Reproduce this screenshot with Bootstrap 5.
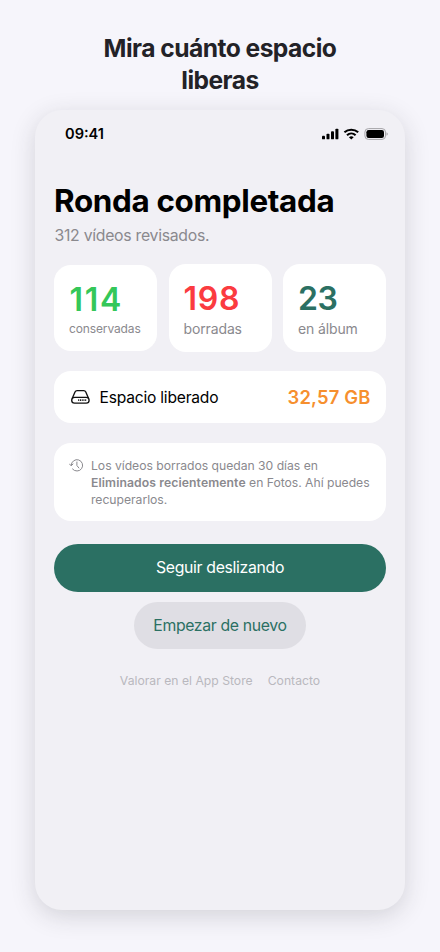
<!DOCTYPE html>
<html lang="es">
<head>
<meta charset="utf-8">
<meta name="viewport" content="width=device-width, initial-scale=1">
<title>Ronda completada</title>
<link href="https://cdn.jsdelivr.net/npm/bootstrap@5.3.0/dist/css/bootstrap.min.css" rel="stylesheet">
<style>
body{background:#f6f5fb;font-family:Inter,"Liberation Sans",sans-serif;height:952px;overflow:hidden}
.headline{font-size:24.6px;line-height:32px;font-weight:700;color:#232227;letter-spacing:-.54px;padding-top:32px;height:110px}
.phone{width:370px;height:800px;border-radius:27px;background:#f1f0f5;box-shadow:0 6px 24px rgba(40,40,50,.17)}
.status{height:47px;padding:0 17.5px 0 30px}
.clock{font-size:14.6px;font-weight:600;color:#000;padding-top:2px}
.content{padding:25px 19px 0}
.title{font-size:31.4px;line-height:38px;font-weight:700;color:#000;letter-spacing:-.34px}
.sub{font-size:15.8px;line-height:20px;color:#8a898e;margin-top:6px;letter-spacing:-.28px;padding-left:.5px}
.panel{background:#fff;border-radius:17px}
.stats{margin-top:17.5px;height:88px;gap:11.5px}
.stat{padding:14.5px 15px 0;height:88px;flex:1 1 0;min-width:0}
.stat.short{height:86px}
.num{font-size:32px;line-height:42px;font-weight:600}
.num.kept{color:#34c759;letter-spacing:1.7px;padding-left:.5px}
.num.gone{color:#fb3b40;letter-spacing:.8px}
.num.album{color:#2b7063;letter-spacing:-.5px}
.lbl{font-size:14px;line-height:18px;color:#8a898e;white-space:nowrap;letter-spacing:-.13px}
.short .lbl{font-size:12px;line-height:16px}
.freed{margin-top:19px;height:52.5px;padding:0 15.5px 0 16px}
.freed .name{font-size:15.6px;color:#000;margin-left:9.5px;letter-spacing:-.21px;padding-top:1.5px}
.freed .size{font-size:18.4px;font-weight:600;color:#f68f2e;letter-spacing:.18px;padding-top:1.5px}
.freed svg{margin-top:1px}
.note{margin-top:20px;height:78px;padding:13.5px 14px 0 15px;color:#8a898e;font-size:12.2px;line-height:17px;letter-spacing:-.03px}
.note b{letter-spacing:.1px}
.note svg{margin-top:1px;margin-right:7px}
.btn-main{margin-top:23px;height:48px;background:#2b7063;color:#fff;font-size:15.8px;border:0;letter-spacing:-.32px}
.btn-alt{margin-top:10px;height:47px;width:172px;background:#dfdee4;color:#2b7063;font-size:15.8px;border:0;padding:0;letter-spacing:-.34px}
.foot{margin-top:24px;font-size:12.2px;line-height:16px;color:#b9b8be;gap:15px}
.battery{margin-left:3px}
</style>
</head>
<body>
<h1 class="headline text-center mb-0">Mira cuánto espacio<br>liberas</h1>
<main class="phone mx-auto">
  <div class="status d-flex align-items-center justify-content-between">
    <span class="clock">09:41</span>
    <div class="d-flex align-items-center">
      <svg width="17" height="12" viewBox="0 0 17 12"><rect x="0" y="7.7" width="3" height="3.6" rx=".9"/><rect x="4.5" y="5.7" width="3" height="5.6" rx=".9"/><rect x="9" y="3.3" width="3" height="8" rx=".9"/><rect x="13.4" y=".7" width="3" height="10.6" rx=".9"/></svg>
      <svg class="ms-1" width="18" height="12" viewBox="0 0 18 12"><g fill="none" stroke="#000" stroke-width="2.1"><path d="M1.4 4.3A10.4 10.4 0 0 1 15.2 4.3"/><path d="M4 7.2A6.4 6.4 0 0 1 12.6 7.2"/></g><path d="M8.3 11.6L5.9 9.3A3.5 3.5 0 0 1 10.7 9.3Z"/></svg>
      <svg class="battery" width="24" height="12" viewBox="0 0 24 12"><rect x=".9" y=".6" width="20.6" height="10.8" rx="3.5" fill="none" stroke="#a5a4a8"/><rect x="2.4" y="2.1" width="17.6" height="7.8" rx="2.2"/><path d="M22.5 4.2q1.3.5 1.3 1.8t-1.3 1.8z" fill="#a5a4a8"/></svg>
    </div>
  </div>
  <div class="content">
    <h2 class="title mb-0">Ronda completada</h2>
    <p class="sub mb-0">312 vídeos revisados.</p>
    <div class="stats d-flex align-items-center">
      <div class="stat short panel"><div class="num kept">114</div><div class="lbl">conservadas</div></div>
      <div class="stat panel"><div class="num gone">198</div><div class="lbl">borradas</div></div>
      <div class="stat panel"><div class="num album">23</div><div class="lbl">en álbum</div></div>
    </div>
    <div class="freed panel d-flex align-items-center">
      <svg width="20" height="16" viewBox="0 0 20 16" fill="none" stroke="#111" stroke-width="1.35" stroke-linejoin="round"><path d="M2.2 9.6L5 3Q5.6 1.6 7.1 1.6H13.7Q15.2 1.6 15.8 3L18.6 9.6"/><rect x="1.7" y="8.3" width="17.4" height="5.8" rx="2.9"/><path d="M8.2 11.2H16.6" stroke-width="1.8" stroke-dasharray="1 .75"/></svg>
      <span class="name">Espacio liberado</span>
      <span class="size ms-auto">32,57 GB</span>
    </div>
    <div class="note panel d-flex align-items-start">
      <svg class="flex-shrink-0" width="15" height="15" viewBox="0 0 15 15" fill="none" stroke="#8a898e" stroke-width="1" stroke-linecap="round" stroke-linejoin="round"><path d="M2.2 7.2A5.7 5.7 0 1 1 3.5 11"/><path d="M.5 6L2.2 7.8L4 6M7.9 4V7.5L9.9 10"/></svg>
      <div class="text-nowrap">Los vídeos borrados quedan 30 días en<br><b class="fw-semibold">Eliminados recientemente</b> en Fotos. Ahí puedes<br>recuperarlos.</div>
    </div>
    <button class="btn btn-main rounded-pill w-100 d-block">Seguir deslizando</button>
    <button class="btn btn-alt rounded-pill d-block mx-auto">Empezar de nuevo</button>
    <div class="foot d-flex justify-content-center"><span>Valorar en el App Store</span><span>Contacto</span></div>
  </div>
</main>
<script src="https://cdn.jsdelivr.net/npm/bootstrap@5.3.0/dist/js/bootstrap.bundle.min.js"></script>
</body>
</html>
